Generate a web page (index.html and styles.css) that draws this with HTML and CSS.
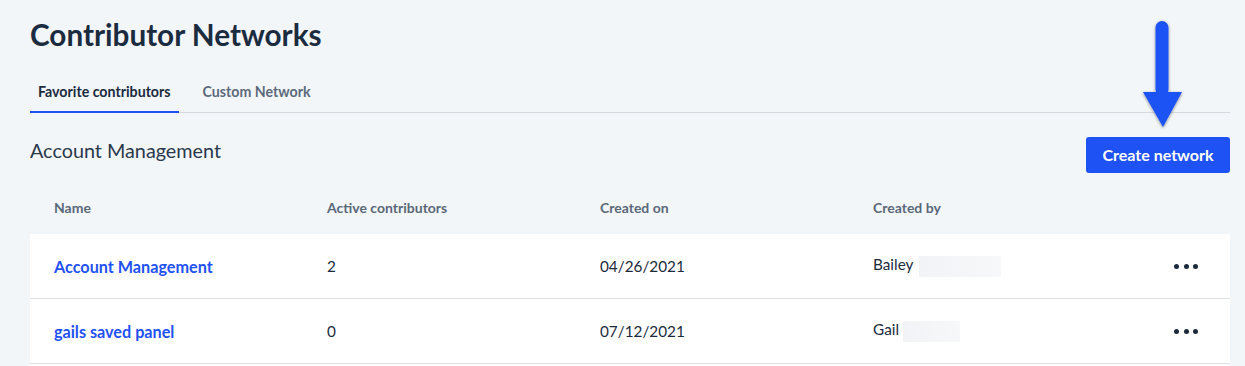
FILE: index.html
```html
<!DOCTYPE html>
<html lang="en">
<head>
<meta charset="utf-8">
<title>Contributor Networks</title>
<link rel="stylesheet" href="styles.css">
</head>
<body>
<main class="page">
  <h1 class="title">Contributor Networks</h1>
  <nav class="tabs">
    <a class="tab tab-active">Favorite contributors</a>
    <a class="tab">Custom Network</a>
  </nav>
  <div class="section-bar">
    <h2 class="section-title">Account Management</h2>
    <button class="btn-primary">Create network</button>
  </div>
  <div class="table">
    <div class="thead">
      <div class="cell">Name</div>
      <div class="cell">Active contributors</div>
      <div class="cell">Created on</div>
      <div class="cell">Created by</div>
      <div class="cell"></div>
    </div>
    <div class="row">
      <div class="cell"><a class="link">Account Management</a></div>
      <div class="cell">2</div>
      <div class="cell">04/26/2021</div>
      <div class="cell">Bailey <span class="redact redact-a"></span></div>
      <div class="cell actions"><span class="dots"><i></i><i></i><i></i></span></div>
    </div>
    <div class="row">
      <div class="cell"><a class="link">gails saved panel</a></div>
      <div class="cell">0</div>
      <div class="cell">07/12/2021</div>
      <div class="cell">Gail <span class="redact redact-b"></span></div>
      <div class="cell actions"><span class="dots"><i></i><i></i><i></i></span></div>
    </div>
    <div class="row row-tail"></div>
  </div>
  <svg class="arrow" width="60" height="130" viewBox="0 0 60 130" aria-hidden="true">
    <defs>
      <filter id="sh" x="-50%" y="-20%" width="200%" height="140%">
        <feDropShadow dx="0" dy="1" stdDeviation="1.6" flood-color="#000" flood-opacity="0.45"/>
      </filter>
    </defs>
    <g filter="url(#sh)" fill="#1f52f4">
      <rect x="23.5" y="21" width="13" height="75" rx="6.5"/>
      <polygon points="11,92 50,92 31,127"/>
    </g>
  </svg>
</main>
</body>
</html>
```

FILE: styles.css
```css
* { box-sizing: border-box; }
html, body { margin: 0; padding: 0; }
body {
  background: #f3f6f8;
  font-family: Lato, "Open Sans", Arial, sans-serif;
  color: #1c2a3d;
  width: 1245px;
  height: 366px;
  overflow: hidden;
}
.page {
  position: relative;
  padding: 0 15px 0 30px;
}
.title {
  margin: 0;
  padding-top: 17px;
  font-size: 29.7px;
  line-height: 36px;
  font-weight: 700;
  color: #1b2b40;
}
.tabs {
  display: flex;
  margin-top: 28px;
  border-bottom: 1px solid #d5dae1;
  height: 32px;
}
.tab {
  display: block;
  font-size: 14.2px;
  font-weight: 700;
  color: #5c6a7c;
  padding: 3px 8px 0;
  margin-right: 16px;
  line-height: 16px;
}
.tab-active {
  color: #1b2b40;
  border-bottom: 2px solid #1f52f4;
  height: 32px;
  margin-bottom: -1px;
}
.section-bar {
  display: flex;
  align-items: center;
  justify-content: space-between;
  margin-top: 24px;
  height: 36px;
}
.section-title {
  margin: -11px 0 0;
  font-size: 19.8px;
  font-weight: 400;
  color: #2a394c;
}
.btn-primary {
  background: #1f52f4;
  border: 0;
  border-radius: 3px;
  color: #fff;
  font-family: inherit;
  font-size: 16px;
  font-weight: 700;
  height: 36px;
  width: 144px;
  padding: 0 0 2px;
}
.table { width: 1200px; }
.thead, .row {
  display: grid;
  grid-template-columns: 273px 273px 273px 273px 1fr;
  padding-left: 24px;
}
.thead {
  height: 61px;
  padding-top: 27px;
  font-size: 14px;
  line-height: 16px;
  font-weight: 700;
  color: #5a6879;
}
.row {
  background: #fff;
  height: 65px;
  align-items: center;
  border-bottom: 1px solid #dde1e7;
  font-size: 15.3px;
  color: #1c2a3d;
}
.row:first-of-type { border-radius: 3px 3px 0 0; }
.link {
  color: #1f52f4;
  font-weight: 700;
  font-size: 16.2px;
}
.redact {
  display: inline-block;
  vertical-align: middle;
  background: linear-gradient(90deg, #f1f3f6, #f7f8fa);
  height: 21px;
}
.redact-a { width: 82px; margin-left: 2px; }
.redact-b { width: 57px; }
.actions {
  display: flex;
  justify-content: flex-end;
  padding-right: 32px;
}
.dots { display: flex; gap: 4.5px; }
.dots i {
  display: block;
  width: 5px;
  height: 5px;
  border-radius: 50%;
  background: #1c2a3d;
}
.arrow {
  position: absolute;
  left: 1132px;
  top: 0;
}
```
